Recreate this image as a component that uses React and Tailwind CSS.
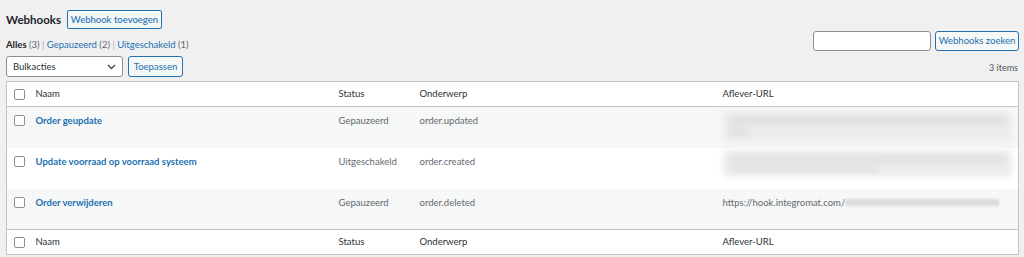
import React from "react";

const rows = [
  { name: "Order geupdate", status: "Gepauzeerd", topic: "order.updated", url: "blur2" },
  { name: "Update voorraad op voorraad systeem", status: "Uitgeschakeld", topic: "order.created", url: "blur1" },
  { name: "Order verwijderen", status: "Gepauzeerd", topic: "order.deleted", url: "hook" },
];

function Checkbox() {
  return <span className="block w-[11px] h-[11px] border border-[#8c8f94] rounded-[2px] bg-white" />;
}

function UrlCell({ kind }) {
  if (kind === "hook") {
    return (
      <div className="flex items-center">
        <span>https://hook.integromat.com/</span>
        <span className="block w-[154px] h-[7px] bg-[#dcdcde] blur-[1px]" />
      </div>
    );
  }
  if (kind === "blur2") {
    return (
      <div className="mt-[-3px] mr-[6px] h-[31px] bg-[#ececed] rounded-[3px] blur-[3px] p-[6px]">
        <div className="h-[7px] bg-[#dedee0] rounded" />
        <div className="mt-[4px] w-[20px] h-[7px] bg-[#dedee0] rounded" />
      </div>
    );
  }
  return (
    <div className="mt-[-5px] mr-[6px] h-[27px] bg-[#ededee] rounded-[3px] blur-[3px] p-[6px]">
      <div className="h-[7px] bg-[#e0e0e1] rounded" />
      <div className="mt-[3px] w-[150px] h-[6px] bg-[#e0e0e1] rounded" />
    </div>
  );
}

function HeadRow({ border }) {
  return (
    <tr className={`h-[25px] text-[#2c3338] ${border}`}>
      <td className="pl-[7px] w-[23px]"><Checkbox /></td>
      <td className="pl-[6px] w-[303px]">Naam</td>
      <td className="pl-[6px] w-[81px]">Status</td>
      <td className="pl-[6px] w-[303px]">Onderwerp</td>
      <td className="pl-[6px]">Aflever-URL</td>
    </tr>
  );
}

export default function App() {
  return (
    <div className="w-[1024px] h-[257px] bg-[#f0f0f1] text-[#3c434a] text-[9.5px] overflow-hidden" style={{ fontFamily: "Lato, 'Noto Sans', sans-serif" }}>
      <div className="pl-[6px] pr-[5px]">
        <div className="flex items-center pt-[10px]">
          <h1 className="text-[11.5px] font-bold text-[#1d2327] leading-none">Webhooks</h1>
          <button className="ml-[6px] h-[19px] w-[95px] border border-[#2271b1] rounded-[2px] bg-[#f6f7f7] text-[#2271b1] text-[9.5px] font-medium leading-none">
            Webhook toevoegen
          </button>
        </div>
        <div className="flex justify-between items-start">
          <div className="pt-[9px] text-[#646970]">
            <span className="text-[#1d2327] font-bold">Alles</span> (3) <span className="text-[#a7aaad]">|</span>{" "}
            <span className="text-[#2271b1]">Gepauzeerd</span> (2) <span className="text-[#a7aaad]">|</span>{" "}
            <span className="text-[#2271b1]">Uitgeschakeld</span> (1)
          </div>
          <div className="flex gap-[4px] mt-[2px]">
            <div className="w-[118px] h-[20px] bg-white border border-[#8c8f94] rounded-[3px]" />
            <button className="h-[20px] w-[84px] border border-[#2271b1] rounded-[3px] bg-[#f6f7f7] text-[#2271b1] text-[9.5px] leading-none">
              Webhooks zoeken
            </button>
          </div>
        </div>
        <div className="flex items-center mt-[4px] h-[21px]">
          <div className="w-[117px] h-[21px] bg-white border border-[#8c8f94] rounded-[3px] flex items-center justify-between px-[6px] text-[#2c3338]">
            <span>Bulkacties</span>
            <svg width="9" height="6" viewBox="0 0 9 6" fill="none"><path d="M1 1l3.5 3.5L8 1" stroke="#3c434a" strokeWidth="1.3" /></svg>
          </div>
          <button className="ml-[5px] h-[21px] w-[55px] border border-[#2271b1] rounded-[3px] bg-[#f6f7f7] text-[#2271b1] text-[9.5px] leading-none">
            Toepassen
          </button>
          <span className="ml-auto pr-[1px] text-[#50575e] text-[9px] mt-[2px]">3 items</span>
        </div>
        <table className="mt-[4px] w-[1013px] bg-white border border-[#c3c4c7] border-collapse table-fixed">
          <thead>
            <HeadRow border="border-b border-[#c3c4c7]" />
          </thead>
          <tbody>
            {rows.map((r, i) => (
              <tr key={r.name} className={`h-[41px] align-top ${i % 2 === 0 ? "bg-[#f6f7f7]" : "bg-white"}`}>
                <td className="pl-[7px] pt-[8px]"><Checkbox /></td>
                <td className="pl-[6px] pt-[7px] text-[#2271b1] font-bold">{r.name}</td>
                <td className="pl-[6px] pt-[7px] text-[#646970]">{r.status}</td>
                <td className="pl-[6px] pt-[7px] text-[#646970]">{r.topic}</td>
                <td className="pl-[6px] pt-[7px] text-[#646970]"><UrlCell kind={r.url} /></td>
              </tr>
            ))}
          </tbody>
          <tfoot>
            <HeadRow border="border-t border-[#c3c4c7]" />
          </tfoot>
        </table>
      </div>
    </div>
  );
}
